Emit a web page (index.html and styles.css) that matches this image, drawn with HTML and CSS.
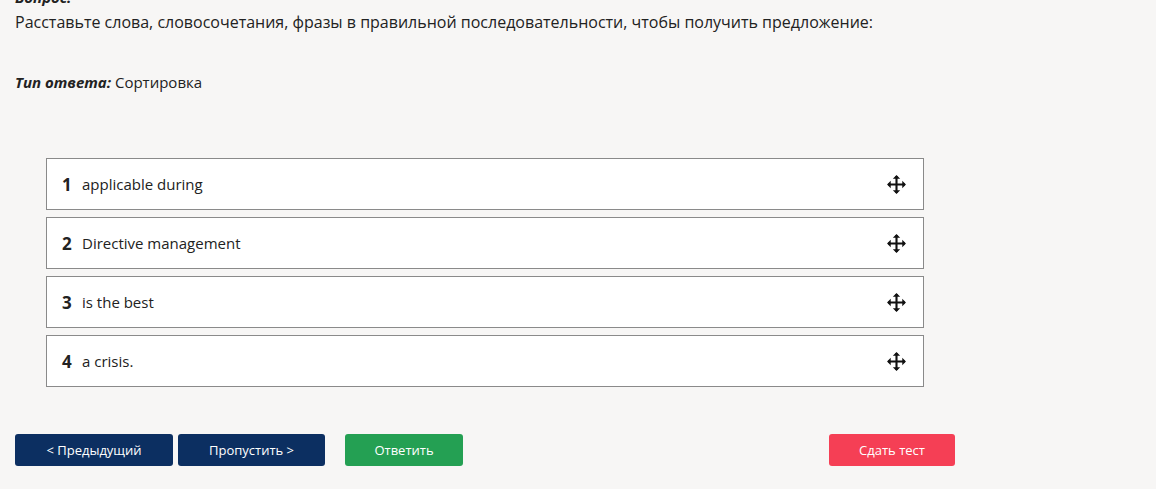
FILE: index.html
```html
<!DOCTYPE html>
<html lang="ru">
<head>
    <meta charset="UTF-8">
    <title>Тест — вопрос</title>
    <link rel="stylesheet" href="styles.css">
</head>
<body>
    <div class="test-page">
        <div class="question-label">Вопрос:</div>
        <div class="question-text">Расставьте слова, словосочетания, фразы в правильной последовательности, чтобы получить предложение:</div>

        <div class="answer-type"><b><i>Тип ответа:</i></b> Сортировка</div>

        <ul class="sort-list">
            <li class="sort-item">
                <span class="sort-num">1</span>
                <span class="sort-text">applicable during</span>
                <svg class="sort-handle" viewBox="0 0 20 20" width="21" height="21">
                    <path d="M10 2v16M2 10h16" stroke="#111" stroke-width="2"/>
                    <path d="M10 1l-3.5 3.5h7zM10 19l-3.5-3.5h7zM1 10l3.5-3.5v7zM19 10l-3.5-3.5v7z" fill="#111"/>
                </svg>
            </li>
            <li class="sort-item">
                <span class="sort-num">2</span>
                <span class="sort-text">Directive management</span>
                <svg class="sort-handle" viewBox="0 0 20 20" width="21" height="21">
                    <path d="M10 2v16M2 10h16" stroke="#111" stroke-width="2"/>
                    <path d="M10 1l-3.5 3.5h7zM10 19l-3.5-3.5h7zM1 10l3.5-3.5v7zM19 10l-3.5-3.5v7z" fill="#111"/>
                </svg>
            </li>
            <li class="sort-item">
                <span class="sort-num">3</span>
                <span class="sort-text">is the best</span>
                <svg class="sort-handle" viewBox="0 0 20 20" width="21" height="21">
                    <path d="M10 2v16M2 10h16" stroke="#111" stroke-width="2"/>
                    <path d="M10 1l-3.5 3.5h7zM10 19l-3.5-3.5h7zM1 10l3.5-3.5v7zM19 10l-3.5-3.5v7z" fill="#111"/>
                </svg>
            </li>
            <li class="sort-item">
                <span class="sort-num">4</span>
                <span class="sort-text">a crisis.</span>
                <svg class="sort-handle" viewBox="0 0 20 20" width="21" height="21">
                    <path d="M10 2v16M2 10h16" stroke="#111" stroke-width="2"/>
                    <path d="M10 1l-3.5 3.5h7zM10 19l-3.5-3.5h7zM1 10l3.5-3.5v7zM19 10l-3.5-3.5v7z" fill="#111"/>
                </svg>
            </li>
        </ul>

        <div class="actions">
            <button type="button" class="btn btn-nav btn-prev">&lt; Предыдущий</button>
            <button type="button" class="btn btn-nav btn-skip">Пропустить &gt;</button>
            <button type="button" class="btn btn-answer">Ответить</button>
            <button type="button" class="btn btn-finish">Сдать тест</button>
        </div>
    </div>
</body>
</html>
```

FILE: styles.css
```css
body {
    font-family: "Open Sans", "Noto Sans", sans-serif;
    background-color: #f7f6f5;
    color: #222;
    margin: 0;
}

.test-page {
    padding: 0 15px;
}

.question-label {
    font-weight: bold;
    font-style: italic;
    font-size: 15px;
    line-height: 20px;
    margin-top: -13px;
}

.question-text {
    font-size: 16px;
    line-height: 22px;
    margin-top: 4px;
}

.answer-type {
    font-size: 15px;
    line-height: 20px;
    margin-top: 39px;
}

.sort-list {
    list-style: none;
    margin: 66px 0 0 31px;
    padding: 0;
    width: 878px;
    display: flex;
    flex-direction: column;
    gap: 7px;
}

.sort-item {
    display: flex;
    align-items: center;
    height: 52px;
    box-sizing: border-box;
    background-color: #ffffff;
    border: 1px solid #8a8a8a;
    padding: 0 16px 0 15px;
    font-size: 15px;
}

.sort-num {
    font-weight: bold;
    font-size: 17px;
    width: 20px;
}

.sort-text {
    flex: 1;
}

.sort-handle {
    display: block;
}

.actions {
    display: flex;
    margin-top: 47px;
}

.btn {
    height: 32px;
    border: none;
    border-radius: 3px;
    color: #ffffff;
    font-family: "Open Sans", "Noto Sans", sans-serif;
    font-size: 13px;
    cursor: pointer;
}

.btn-nav {
    background-color: #0c2f61;
}

.btn-prev {
    width: 158px;
}

.btn-skip {
    width: 147px;
    margin-left: 5px;
}

.btn-answer {
    width: 118px;
    margin-left: 20px;
    background-color: #24a053;
}

.btn-finish {
    width: 126px;
    margin-left: 366px;
    background-color: #f53f55;
}
```
